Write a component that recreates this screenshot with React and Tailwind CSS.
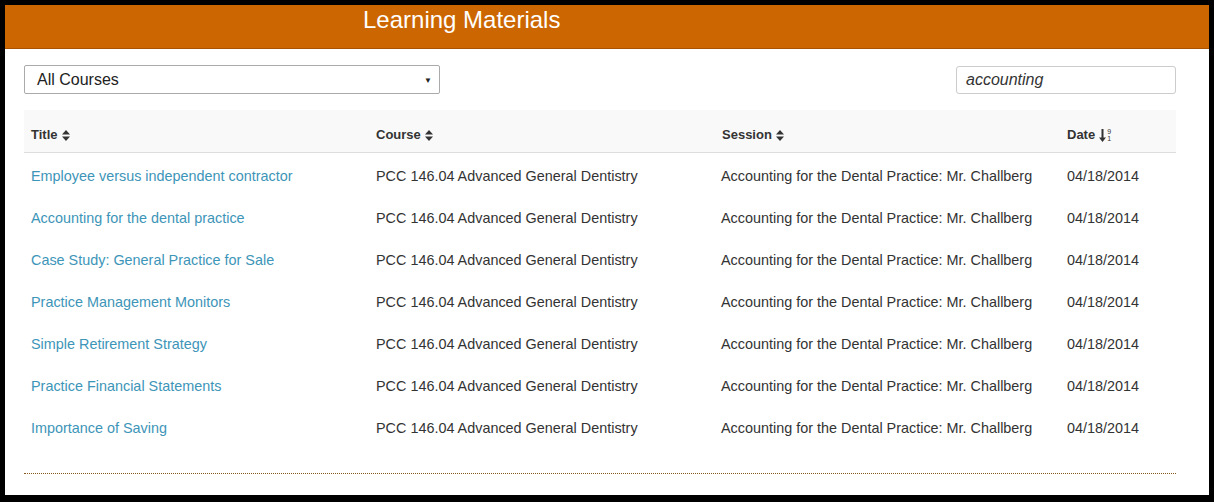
const rows = [
  'Employee versus independent contractor',
  'Accounting for the dental practice',
  'Case Study: General Practice for Sale',
  'Practice Management Monitors',
  'Simple Retirement Strategy',
  'Practice Financial Statements',
  'Importance of Saving',
];

// small up/down caret pair used on sortable headers
function SortCaret() {
  return (
    <svg width="8" height="11" viewBox="0 0 8 11" className="ml-1 inline-block">
      <path d="M4 0 L8 4.5 H0 Z" fill="#333" />
      <path d="M4 11 L8 6.5 H0 Z" fill="#333" />
    </svg>
  );
}

// down arrow with 9 over 1, the active numeric sort
function SortNumeric() {
  return (
    <span className="ml-1 inline-flex items-center">
      <svg width="7" height="13" viewBox="0 0 7 13">
        <path d="M3.5 13 L7 8.5 H4.5 V0 H2.5 V8.5 H0 Z" fill="#333" />
      </svg>
      <span className="flex flex-col text-[7px] leading-[7px] font-normal ml-px">
        <span>9</span>
        <span>1</span>
      </span>
    </span>
  );
}

export default function App() {
  return (
    <div className="w-[1214px] h-[502px] bg-black pt-[5px] pl-[5px] font-['Liberation_Sans',Arial,sans-serif] text-[#333]">
      <div className="w-[1204px] h-[490px] bg-white flex flex-col">
        {/* Header bar */}
        <div className="h-[44px] bg-[#cc6600] border-b border-[#a85400] pl-[358px] pt-px">
          <h1 className="text-white text-[24px] leading-[28px]">Learning Materials</h1>
        </div>

        {/* Filters */}
        <div className="flex justify-between items-center pl-[19px] pr-[33px] mt-[16px]">
          <div className="relative w-[416px] h-[29px] border border-[#aaa] rounded-[2px] flex items-center pl-[12px] text-[16px] text-[#222]">
            All Courses
            <span className="absolute right-[7px] top-[9px] text-[8px]">▼</span>
          </div>
          <div className="w-[220px] h-[28px] border border-[#ccc] rounded-[3px] flex items-center pl-[9px] text-[16px] italic text-[#333]">
            accounting
          </div>
        </div>

        {/* Table */}
        <div className="ml-[19px] mr-[33px] mt-[16px]">
          <div className="grid grid-cols-[352px_346px_345px_1fr] h-[43px] items-center bg-[#f9f9f9] border-b border-[#ddd] text-[13px] font-bold pt-[8px]">
            <div className="pl-[7px] flex items-center">Title<SortCaret /></div>
            <div className="flex items-center">Course<SortCaret /></div>
            <div className="flex items-center">Session<SortCaret /></div>
            <div className="flex items-center">Date<SortNumeric /></div>
          </div>
          {rows.map((title) => (
            <div key={title} className="grid grid-cols-[352px_345px_346px_1fr] h-[42px] items-center text-[14.4px] pt-[6px]">
              <a className="pl-[7px] text-[#3d95b8]">{title}</a>
              <div>PCC 146.04 Advanced General Dentistry</div>
              <div>Accounting for the Dental Practice: Mr. Challberg</div>
              <div>04/18/2014</div>
            </div>
          ))}
          <div className="mt-[26px] border-t border-dotted border-[#8a5a1c]"></div>
        </div>
      </div>
    </div>
  );
}
